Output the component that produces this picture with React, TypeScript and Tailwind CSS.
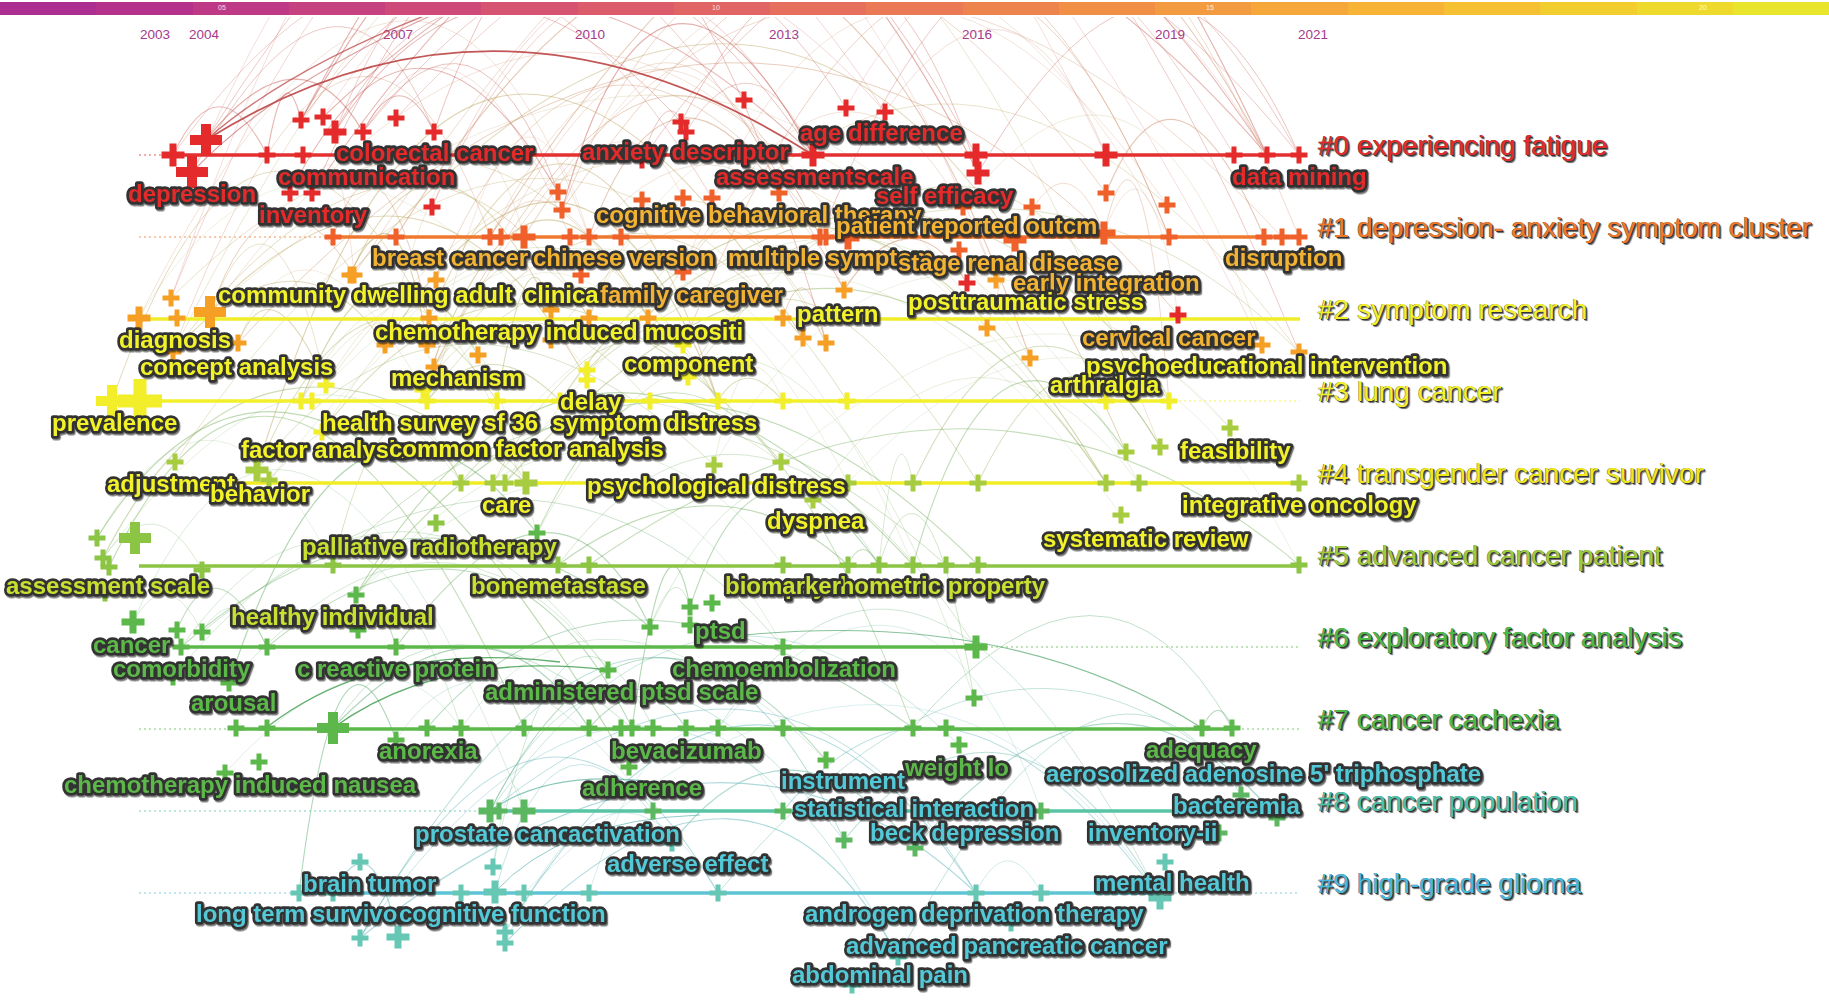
import React from 'react';

type Sz = 's' | 'm' | 'L' | 'X';
type Node = [number, number, Sz?, string?];

const R = '#e42a2a';
const OR = '#f0602a';
const O = '#f5a024';
const Y = '#f2ee2a';
const YG = '#a8cc40';
const G5 = '#8cc444';
const G = '#5cb84a';
const TG = '#5cb860';
const T = '#66c8b4';

interface Row {
  y: number;
  line: string;
  solid: [number, number];
  nodeColor: string;
  arc: string;
  nodes: Node[];
}

const ROWS: Row[] = [
  {
    y: 155, line: '#e43030', solid: [173, 1299], nodeColor: R, arc: '#c8605a',
    nodes: [[173,155,'m'],[206,140,'L'],[192,172,'L'],[267,155],[303,155],[301,120],[323,117],[335,132,'m'],[363,132],[396,118],[434,132],[290,193],[312,193],[432,207],[642,160],[681,122],[686,132],[744,100],[846,108],[885,112],[813,155,'m'],[976,155,'m'],[978,173,'m'],[1106,155,'m'],[1234,155],[1267,155],[1299,155]],
  },
  {
    y: 237, line: '#f0782e', solid: [333, 1299], nodeColor: OR, arc: '#c8845a',
    nodes: [[333,237],[396,237],[490,237],[501,237],[524,237,'m'],[570,237],[589,237],[621,237],[558,192],[562,210],[642,200],[683,198],[712,198],[779,193],[820,237],[826,237],[848,238,'m'],[1015,240,'m'],[1104,233,'m'],[1169,237],[1264,237],[1282,237],[1299,237],[1032,207],[1106,193],[1167,205],[963,207],[959,250],[967,283,'s',R],[683,272],[581,275],[1178,315,'s',R],[354,275,'s',O],[436,280,'s',O],[996,280,'s',O],[844,290,'s',O],[783,318,'s',O]],
  },
  {
    y: 319, line: '#f0ec2a', solid: [139, 1300], nodeColor: O, arc: '#b8a258',
    nodes: [[139,318,'m'],[171,298],[177,318],[210,312,'L'],[238,343],[173,352],[385,345],[427,345],[478,355],[434,367],[551,340],[429,318],[551,310],[589,318],[648,318],[803,338],[826,343],[987,328],[1030,358],[1262,345],[1299,352],[350,275]],
  },
  {
    y: 401, line: '#f2f02a', solid: [101, 1169], nodeColor: Y, arc: '#a8b060',
    nodes: [[140,401,'X'],[112,401,'L'],[301,401],[312,401],[326,385],[427,401],[497,401],[560,401],[587,370],[587,380],[650,401],[423,390],[322,432],[718,401],[783,401],[847,401],[1106,401],[1169,401],[688,377],[683,345]],
  },
  {
    y: 483, line: '#f0ec24', solid: [236, 1300], nodeColor: YG, arc: '#98b468',
    nodes: [[175,462],[257,470,'m'],[269,480],[461,483],[493,483],[505,483],[526,483,'m'],[714,465],[781,462],[848,483],[913,483],[978,483],[1106,483],[1139,483],[1299,483],[813,500],[1126,452],[1160,447],[1230,428],[1121,515]],
  },
  {
    y: 566, line: '#8cc444', solid: [139, 1299], nodeColor: G5, arc: '#80b468',
    nodes: [[97,538],[135,538,'L'],[103,558],[109,567],[105,593],[202,570],[333,565],[558,565],[589,565],[783,565],[848,565],[879,565],[913,565],[946,565],[978,565],[1299,565],[436,523],[537,533,'s',G]],
  },
  {
    y: 647, line: '#5cb84a', solid: [181, 976], nodeColor: G, arc: '#68ac68',
    nodes: [[133,622,'m'],[177,630],[202,632],[181,647],[267,647],[396,647],[358,630],[356,595],[173,677],[229,683],[608,670],[650,627],[690,607],[712,603],[690,625],[783,647],[976,647,'m']],
  },
  {
    y: 729, line: '#5cb84a', solid: [236, 1232], nodeColor: G, arc: '#58a870',
    nodes: [[236,728],[267,728],[333,728,'L'],[427,728],[461,728],[524,728],[589,728],[621,728],[632,728],[653,728],[686,728],[718,728],[783,728],[913,728],[946,728],[1202,728],[1232,728],[396,740],[259,762],[225,773],[629,767],[974,698],[959,745],[826,760]],
  },
  {
    y: 811, line: '#58c4a4', solid: [490, 1277], nodeColor: TG, arc: '#58b09c',
    nodes: [[490,811,'m'],[499,811],[524,811,'m'],[653,811],[783,811],[1041,811],[1277,818],[844,840],[915,848],[1219,833],[1241,795],[672,843,'s',T]],
  },
  {
    y: 893, line: '#5cc4d4', solid: [299, 1160], nodeColor: T, arc: '#58b0b4',
    nodes: [[360,862],[493,867],[299,893],[333,893],[461,893],[495,892,'m'],[524,893],[589,893],[360,938],[398,937,'m'],[505,932],[505,943],[718,893],[976,893],[1041,893],[1160,898,'m'],[1165,862],[1011,923],[898,957],[852,985]],
  },
];

const LR = '#e42a2a';
const LGO = '#f2b232';
const LY = '#f2f22a';
const LYG = '#c9e030';
const LG = '#5cb848';
const LC = '#52c8d6';

const LABELS: [string, number, number, string][] = [
  ['colorectal cancer',336,152,LR],['anxiety descriptor',582,151,LR],['age difference',800,132,LR],['depression',128,193,LR],['communication',278,176,LR],['inventory',259,214,LR],['assessmentscale',716,176,LR],['self efficacy',876,195,LR],['data mining',1232,176,LR],
  ['cognitive behavioral therapy',596,214,LGO],['patient reported outcm',836,225,LGO],['breast cancer',372,257,LGO],['chinese version',533,257,LGO],['multiple symptom',728,257,LGO],['stage renal disease',898,262,LGO],['early integration',1013,282,LGO],['disruption',1225,257,LGO],
  ['community dwelling adult',218,294,LY],['clinical',524,294,LY],['family caregiver',600,294,LGO],['chemotherapy induced mucositi',375,331,LY],['pattern',797,313,LY],['posttraumatic stress',908,301,LY],['diagnosis',119,339,LY],['concept analysis',140,366,LY],['mechanism',391,377,LY],['component',624,363,LY],['cervical cancer',1082,337,LGO],['psychoeducational intervention',1086,365,LY],['arthralgia',1050,384,LY],
  ['prevalence',52,422,LY],['delay',560,401,LY],['health survey sf 36',322,422,LY],['symptom distress',552,422,LY],['factor analysis',241,449,LY],['common factor analysis',389,448,LY],
  ['adjustment',107,483,LY],['behavior',210,493,LY],['care',482,504,LY],['psychological distress',587,485,LY],['dyspnea',767,520,LY],['feasibility',1180,450,LY],['integrative oncology',1182,504,LY],['systematic review',1043,538,LY],
  ['palliative radiotherapy',302,546,LYG],['assessment scale',6,585,LYG],['bonemetastase',471,585,LYG],['psychometric property',785,585,LYG],['biomarker',725,585,LYG],['healthy individual',231,616,LYG],
  ['cancer',93,644,LG],['comorbidity',113,668,LG],['c reactive protein',297,668,LG],['arousal',191,702,LG],['ptsd',695,630,LG],['chemoembolization',672,668,LG],['administered ptsd scale',485,691,LG],
  ['anorexia',379,750,LG],['chemotherapy induced nausea',64,784,LG],['bevacizumab',611,750,LG],['adherence',582,787,LG],['weight lo',905,767,LG],['adequacy',1146,749,LG],['instrument',781,780,LC],
  ["aerosolized adenosine 5' triphosphate",1046,773,LC],['statistical interaction',794,808,LC],['prostate cancer',415,833,LC],['activation',568,833,LC],['beck depression',870,832,LC],['inventory-ii',1088,832,LC],['bacteremia',1173,805,LC],['adverse effect',607,863,LC],
  ['brain tumor',303,883,LC],['long term survivor',196,913,LC],['cognitive function',399,913,LC],['mental health',1095,882,LC],['androgen deprivation therapy',805,913,LC],['advanced pancreatic cancer',846,945,LC],['abdominal pain',792,974,LC],
];

const CLUSTERS: { text: string; cls: string }[] = [
  { text: '#0 experiencing fatigue', cls: 'text-[#e42a2a]' },
  { text: '#1 depression- anxiety symptom cluster', cls: 'text-[#f0782a]' },
  { text: '#2 symptom research', cls: 'text-[#f2f02a]' },
  { text: '#3 lung cancer', cls: 'text-[#f2f02a]' },
  { text: '#4 transgender cancer survivor', cls: 'text-[#f0e81a]' },
  { text: '#5 advanced cancer patient', cls: 'text-[#9ccc3c]' },
  { text: '#6 exploratory factor analysis', cls: 'text-[#4cb848]' },
  { text: '#7 cancer cachexia', cls: 'text-[#4cb848]' },
  { text: '#8 cancer population', cls: 'text-[#4cc0a8]' },
  { text: '#9 high-grade glioma', cls: 'text-[#48b8dc]' },
];

const BAR = [
  'bg-[#ac2e91]','bg-[#b5328c]','bg-[#be3986]','bg-[#c6417f]','bg-[#ce4a79]','bg-[#d65372]','bg-[#dc5c6b]','bg-[#e16564]','bg-[#e66f5d]','bg-[#ea7955]',
  'bg-[#ee844d]','bg-[#f18f46]','bg-[#f39b40]','bg-[#f5a73a]','bg-[#f6b335]','bg-[#f5c031]','bg-[#f2cd2e]','bg-[#eed92d]','bg-[#e8e52c]',
];

const YEARS: [string, number][] = [['2003',155],['2004',204],['2007',398],['2010',590],['2013',784],['2016',977],['2019',1170],['2021',1313]];

const SIZES: Record<Sz, [number, number]> = { s: [8.5, 5], m: [11.5, 7], L: [16, 10], X: [22, 13] };

function crossPath(x: number, y: number, sz: Sz): string {
  const [h, t] = SIZES[sz];
  return `M${x - h} ${y - t / 2}h${2 * h}v${t}h${-2 * h}z M${x - t / 2} ${y - h}h${t}v${2 * h}h${-t}z`;
}

function mulberry32(seed: number) {
  let a = seed;
  return function () {
    a |= 0;
    a = (a + 0x6d2b79f5) | 0;
    let t = Math.imul(a ^ (a >>> 15), 1 | a);
    t = (t + Math.imul(t ^ (t >>> 7), 61 | t)) ^ t;
    return ((t ^ (t >>> 14)) >>> 0) / 4294967296;
  };
}

interface Arc { d: string; c: string; o: number; w: number }

function buildArcs(): Arc[] {
  const rnd = mulberry32(20211);
  const arcs: Arc[] = [];
  const counts = [40, 32, 30, 28, 24, 22, 20, 18, 12, 12];
  const offsets = [-1, 0, 0, 0, 0, 1, 1, 2];
  ROWS.forEach((row, ri) => {
    for (let k = 0; k < counts[ri]; k++) {
      const a = row.nodes[Math.floor(rnd() * row.nodes.length)];
      let rr = ri + offsets[Math.floor(rnd() * offsets.length)];
      if (rr < 0) rr = 0;
      if (rr > 9) rr = 9;
      const nb = ROWS[rr].nodes;
      const b = nb[Math.floor(rnd() * nb.length)];
      const dx = Math.abs(b[0] - a[0]);
      const f1 = rnd();
      const f2 = rnd();
      const f3 = rnd();
      if (dx < 30) continue;
      if (ri >= 3 && dx > 720) continue;
      const [p, q] = a[0] < b[0] ? [a, b] : [b, a];
      const h = dx * (ri >= 3 ? 0.16 + f1 * 0.22 : 0.22 + f1 * 0.3) + 10;
      const peak = Math.min(p[1], q[1]) - h;
      const cy = 2 * peak - 0.5 * (p[1] + q[1]);
      const cx = (p[0] + q[0]) / 2 + (f2 - 0.5) * dx * 0.3;
      arcs.push({
        d: `M${p[0]} ${p[1]} Q${cx.toFixed(1)} ${cy.toFixed(1)} ${q[0]} ${q[1]}`,
        c: row.arc,
        o: 0.26 + f3 * 0.24,
        w: 0.7 + f3 * 0.5,
      });
    }
  });
  return arcs;
}

const ARCS = buildArcs();

const STRONG: Arc[] = [
  { d: 'M206 140 Q500 -45 813 155', c: '#b83838', o: 0.85, w: 1.8 },
  { d: 'M206 140 Q320 40 560 -30', c: '#b84040', o: 0.7, w: 1.4 },
  { d: 'M192 172 Q300 60 520 -20', c: '#c05050', o: 0.55, w: 1.1 },
  { d: 'M267 727 Q380 640 560 662', c: '#3a9a48', o: 0.8, w: 1.3 },
  { d: 'M333 728 Q440 650 608 670', c: '#3a9a48', o: 0.8, w: 1.3 },
  { d: 'M700 640 Q1000 600 1202 728', c: '#3a9a58', o: 0.6, w: 1.1 },
  { d: 'M490 811 Q560 760 700 790', c: '#3aa088', o: 0.6, w: 1.1 },
  { d: 'M495 892 Q560 820 700 815', c: '#3aa0a0', o: 0.55, w: 1.0 },
];

export default function App() {
  return (
    <div className="w-[1829px] h-[1000px] bg-white overflow-hidden flex flex-col font-['Liberation_Sans',Arial,sans-serif]">
      <div className="relative flex h-[13px] mt-[2px] shrink-0">
        {BAR.map((c, i) => (
          <div key={i} className={`flex-1 ${c}`} />
        ))}
        <span className="absolute left-[218px] top-[2px] text-[7px] leading-none text-white/80">05</span>
        <span className="absolute left-[712px] top-[2px] text-[7px] leading-none text-white/80">10</span>
        <span className="absolute left-[1206px] top-[2px] text-[7px] leading-none text-white/80">15</span>
        <span className="absolute left-[1699px] top-[2px] text-[7px] leading-none text-white/80">20</span>
      </div>
      <div className="flex flex-1">
        <svg width={1318} height={985} viewBox="0 15 1318 985" className="shrink-0 overflow-visible">
          <defs>
            <clipPath id="arcclip">
              <rect x={0} y={17} width={1318} height={983} />
            </clipPath>
            <filter id="lblshadow" x="-5%" y="-20%" width="110%" height="140%">
              <feDropShadow dx="1.2" dy="1.6" stdDeviation="0.6" floodColor="#000" floodOpacity="0.55" />
            </filter>
          </defs>
          {YEARS.map(([t, x]) => (
            <text key={t} x={x} y={34} textAnchor="middle" dominantBaseline="central" fontSize={13.5} fill="#a33a8c" fontFamily="'Liberation Sans', Arial, sans-serif">
              {t}
            </text>
          ))}
          <g clipPath="url(#arcclip)" fill="none">
            {ARCS.map((a, i) => (
              <path key={i} d={a.d} stroke={a.c} strokeOpacity={a.o} strokeWidth={a.w} />
            ))}
            {STRONG.map((a, i) => (
              <path key={'s' + i} d={a.d} stroke={a.c} strokeOpacity={a.o} strokeWidth={a.w} />
            ))}
          </g>
          {ROWS.map((row, ri) => (
            <g key={ri}>
              {row.solid[0] > 145 && (
                <line x1={139} y1={row.y} x2={row.solid[0]} y2={row.y} stroke={row.line} strokeWidth={1.2} strokeDasharray="2 3" strokeOpacity={0.8} />
              )}
              {row.solid[1] < 1290 && (
                <line x1={row.solid[1]} y1={row.y} x2={1300} y2={row.y} stroke={row.line} strokeWidth={1.2} strokeDasharray="2 3" strokeOpacity={0.8} />
              )}
              <line x1={row.solid[0]} y1={row.y} x2={row.solid[1]} y2={row.y} stroke={row.line} strokeWidth={3.5} />
            </g>
          ))}
          {ROWS.map((row, ri) => (
            <g key={'n' + ri}>
              {row.nodes.map((n, i) => (
                <path key={i} d={crossPath(n[0], n[1], n[2] ?? 's')} fill={n[3] ?? row.nodeColor} />
              ))}
            </g>
          ))}
          <g filter="url(#lblshadow)" fontFamily="'Liberation Sans', Arial, sans-serif" fontWeight={700} fontSize={24}>
            {LABELS.map(([t, x, y, c], i) => (
              <text
                key={i}
                x={x}
                y={y}
                dominantBaseline="central"
                fill={c}
                stroke="#333333"
                strokeWidth={5.5}
                strokeLinejoin="round"
                paintOrder="stroke"
              >
                {t}
              </text>
            ))}
          </g>
        </svg>
        <div className="flex flex-col pt-[90px]">
          {CLUSTERS.map((c) => (
            <div key={c.text} className="h-[82px] flex items-center">
              <span
                className={`text-[28px] leading-none whitespace-nowrap [text-shadow:-0.5px_-0.5px_0_#777,1px_1px_0_#333,2px_2px_1px_rgba(0,0,0,0.6)] ${c.cls}`}
              >
                {c.text}
              </span>
            </div>
          ))}
        </div>
      </div>
    </div>
  );
}
